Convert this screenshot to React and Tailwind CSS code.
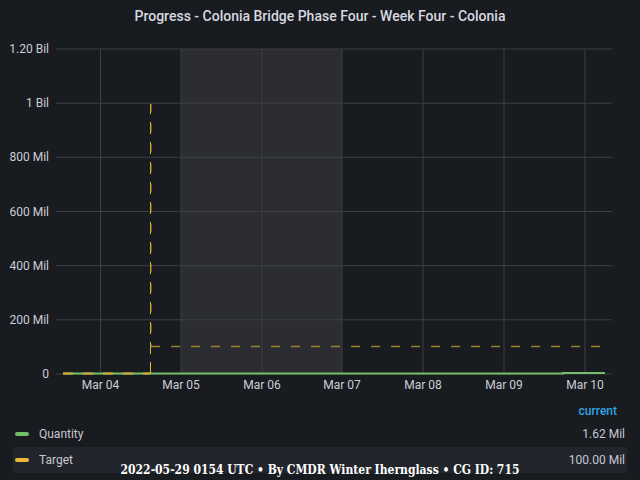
const yTicks = [
  { v: "1.20 Bil", y: 49 },
  { v: "1 Bil", y: 103.2 },
  { v: "800 Mil", y: 157.3 },
  { v: "600 Mil", y: 211.5 },
  { v: "400 Mil", y: 265.7 },
  { v: "200 Mil", y: 319.8 },
  { v: "0", y: 374 },
];

const xTicks = [
  { v: "Mar 04", x: 100.5 },
  { v: "Mar 05", x: 181 },
  { v: "Mar 06", x: 262 },
  { v: "Mar 07", x: 342 },
  { v: "Mar 08", x: 423 },
  { v: "Mar 09", x: 504 },
  { v: "Mar 10", x: 585 },
];

const series = [
  { name: "Quantity", color: "bg-[#73bf69]", value: "1.62 Mil" },
  { name: "Target", color: "bg-[#eab839]", value: "100.00 Mil", hover: true },
];

function Chart() {
  return (
    <svg width="640" height="368" viewBox="0 32 640 368" className="block">
      {/* highlighted time region */}
      <rect x="181" y="49" width="161" height="325" fill="#2b2d32" />

      {yTicks.map((t) => (
        <g key={t.v}>
          <line x1="56" x2="612" y1={t.y} y2={t.y} stroke="#3d3f45" strokeWidth="1" />
          <text
            x="49"
            y={t.y + 4}
            textAnchor="end"
            fontSize="12"
            fill="#cdcdd6"
            fontFamily="Roboto, sans-serif"
          >
            {t.v}
          </text>
        </g>
      ))}

      {xTicks.map((t) => (
        <g key={t.v}>
          <line x1={t.x} x2={t.x} y1="49" y2="374" stroke="#3d3f45" strokeWidth="1" />
          <text
            x={t.x}
            y="389"
            textAnchor="middle"
            fontSize="12"
            fill="#cdcdd6"
            fontFamily="Roboto, sans-serif"
          >
            {t.v}
          </text>
        </g>
      ))}

      {/* quantity */}
      <polyline
        points="63,373.5 563,373.5 563,373 605,373"
        fill="none"
        stroke="#73bf69"
        strokeWidth="2"
      />

      {/* target */}
      <line x1="63" y1="373.5" x2="150" y2="373.5" stroke="#d9ab35" strokeWidth="2" strokeDasharray="10 10" />
      <line x1="150.5" y1="374" x2="150.5" y2="104" stroke="#eab839" strokeWidth="1" strokeDasharray="12 8" />
      <line x1="151" y1="104" x2="151" y2="347" stroke="#b58d2c" strokeWidth="1" strokeDasharray="8 12" />
      <line x1="151" y1="346.5" x2="611" y2="346.5" stroke="#9a7f30" strokeWidth="1.5" strokeDasharray="9 11" />
    </svg>
  );
}

export default function App() {
  return (
    <div className="relative w-[640px] h-[480px] overflow-hidden bg-[#181b1f] font-['Roboto',sans-serif] text-[#ccccdc]">
      <div className="h-[32px] flex items-center justify-center text-[14px] font-medium text-[#d8d9e0]">
        Progress - Colonia Bridge Phase Four - Week Four - Colonia
      </div>

      <Chart />

      <div className="flex flex-col">
        <div className="h-[21px] flex items-center justify-end pr-[23px] text-[12px] font-medium text-[#33a2e5]">
          current
        </div>
        {series.map((s) => (
          <div
            key={s.name}
            className={`mx-[13px] h-[26px] flex items-center pl-[2px] pr-[2px] text-[12px] ${
              s.hover ? "bg-[#22252b]" : ""
            }`}
          >
            <span className={`w-[14px] h-[4px] rounded-sm ${s.color}`} />
            <span className="ml-[10px] flex-1 text-[#c7c7d1]">{s.name}</span>
            <span className="text-[#c7c7d1]">{s.value}</span>
          </div>
        ))}
      </div>

      <div className="absolute left-0 right-0 bottom-0 h-[20px] flex items-center justify-center font-['DejaVu_Serif_Condensed','DejaVu_Serif',serif] [font-stretch:condensed] text-[12px] font-bold text-white">
        2022-05-29 0154 UTC • By CMDR Winter Ihernglass • CG ID: 715
      </div>
    </div>
  );
}
